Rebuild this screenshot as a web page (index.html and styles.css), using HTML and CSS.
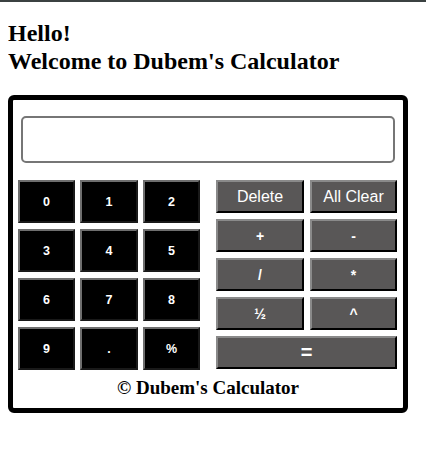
FILE: index.html
```html
<!DOCTYPE html>
<html>
<head>
<meta charset="utf-8">
<link rel="stylesheet" href="styles.css">
</head>
<body>
<h2 class="title">Hello!<br>Welcome to Dubem's Calculator</h2>
<div class="calc">
  <input class="display" type="text">
  <div class="keypad">
    <div class="nums">
      <button class="num">0</button>
      <button class="num">1</button>
      <button class="num">2</button>
      <button class="num">3</button>
      <button class="num">4</button>
      <button class="num">5</button>
      <button class="num">6</button>
      <button class="num">7</button>
      <button class="num">8</button>
      <button class="num">9</button>
      <button class="num">.</button>
      <button class="num">%</button>
    </div>
    <div class="ops">
      <button class="op op-word">Delete</button>
      <button class="op op-word">All Clear</button>
      <button class="op">+</button>
      <button class="op">-</button>
      <button class="op">/</button>
      <button class="op">*</button>
      <button class="op">½</button>
      <button class="op">^</button>
      <button class="op op-eq">=</button>
    </div>
  </div>
  <p class="footer">© Dubem's Calculator</p>
</div>
</body>
</html>
```
FILE: styles.css
```css
body {
  margin: 0 8px 8px;
  font-family: "Liberation Serif", "Times New Roman", serif;
}
body::before {
  content: "";
  position: fixed;
  top: 0;
  left: 0;
  right: 0;
  height: 2px;
  background: #3b4141;
}
.title {
  font-size: 24px;
  font-weight: bold;
  margin: 0 0 20px;
  padding-top: 20px;
  line-height: 27.6px;
}
.calc {
  width: 390px;
  border: 5px solid #000;
  border-radius: 6px;
  padding-top: 16px;
}
.display {
  display: block;
  box-sizing: border-box;
  width: 374px;
  height: 47px;
  margin: 0 8px;
  border: 2px solid #767676;
  border-radius: 5px;
  background: #fff;
  outline: none;
}
.keypad {
  display: flex;
  margin-top: 17px;
  padding-left: 5px;
  gap: 16px;
}
.nums {
  display: grid;
  grid-template-columns: 57px 58px 57px;
  grid-auto-rows: 43px;
  column-gap: 5px;
  row-gap: 6px;
}
.num {
  margin: 0;
  padding: 0;
  background: #000;
  color: #fff;
  border: 2px outset #6e6e6e;
  font-family: "Liberation Sans", Arial, sans-serif;
  font-size: 12.5px;
  font-weight: bold;
}
.ops {
  display: grid;
  grid-template-columns: 88px 87px;
  grid-auto-rows: 33px;
  column-gap: 6px;
  row-gap: 6px;
}
.op {
  margin: 0;
  padding: 0;
  background: #595757;
  color: #fff;
  border: 2px outset #8a8a8a;
  border-right-color: #111;
  border-bottom-color: #111;
  font-family: "Liberation Sans", Arial, sans-serif;
  font-size: 14px;
  font-weight: bold;
}
.op-word {
  font-size: 16px;
  font-weight: normal;
}
.op-eq {
  grid-column: 1 / 3;
  font-size: 20px;
}
.footer {
  margin: 7px 0 9px;
  text-align: center;
  font-size: 19px;
  line-height: 22px;
  font-weight: bold;
}
```
